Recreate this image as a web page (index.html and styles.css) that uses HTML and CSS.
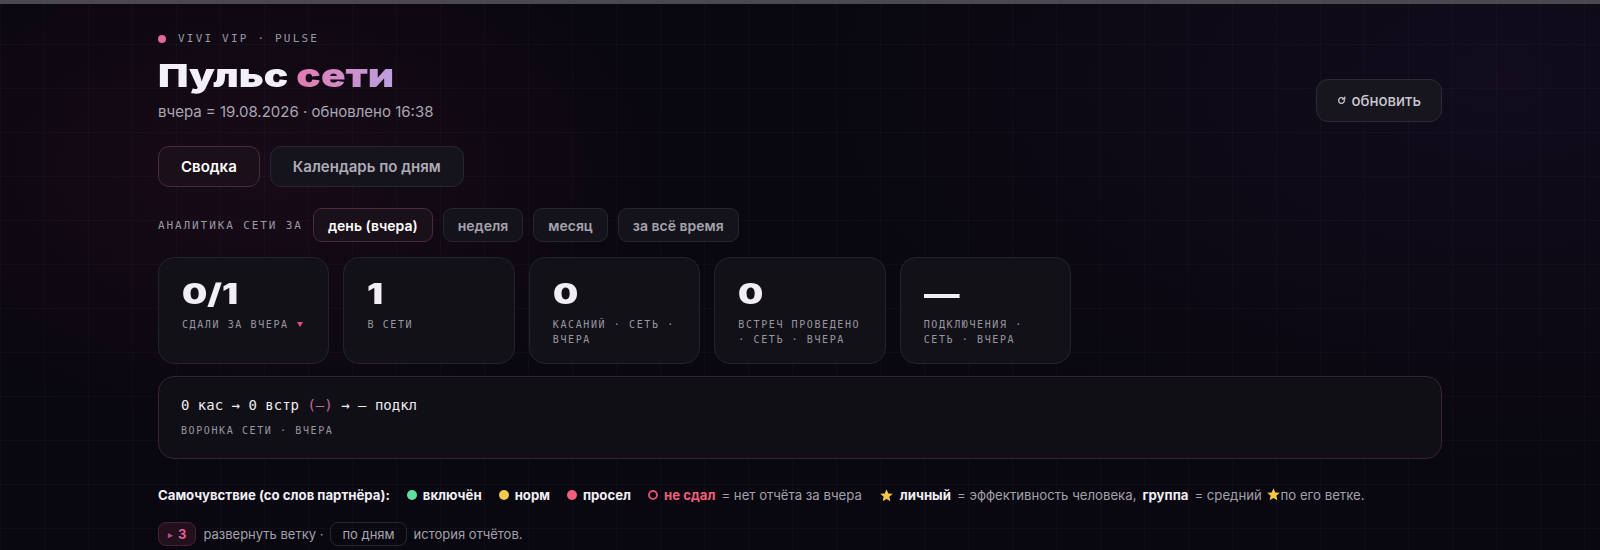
FILE: index.html
```html
<!DOCTYPE html>
<html lang="ru">
<head>
    <meta charset="UTF-8">
    <meta name="viewport" content="width=device-width, initial-scale=1.0">
    <title>Пульс сети</title>
    <link rel="stylesheet" href="styles.css">
</head>
<body>
    <div class="topbar"></div>

    <div class="page">
        <!-- Шапка -->
        <div class="header">
            <div>
                <div class="eyebrow"><span class="dot"></span>VIVI VIP · PULSE</div>
                <h1 class="title"><span class="wide">Пульс <span class="accent">сети</span></span></h1>
                <div class="subtitle">вчера = 19.08.2026 · обновлено 16:38</div>
            </div>
            <button class="refresh">
                <svg width="9" height="9" viewBox="0 0 10 10"><path d="M8.2 5a3.2 3.2 0 1 1-1-2.3" fill="none" stroke="currentColor" stroke-width="1.4" stroke-linecap="round"/><path d="M8.6 1.2v2.4H6.2" fill="none" stroke="currentColor" stroke-width="1.4" stroke-linecap="round" stroke-linejoin="round"/></svg>
                обновить
            </button>
        </div>

        <!-- Вкладки -->
        <div class="tabs">
            <button class="tab active">Сводка</button>
            <button class="tab">Календарь по дням</button>
        </div>

        <!-- Период -->
        <div class="period">
            <span class="caps">АНАЛИТИКА СЕТИ ЗА</span>
            <button class="chip active">день (вчера)</button>
            <button class="chip">неделя</button>
            <button class="chip">месяц</button>
            <button class="chip">за всё время</button>
        </div>

        <!-- Карточки -->
        <div class="stats">
            <div class="stat">
                <div class="num"><span class="wide">0/1</span></div>
                <div class="label">СДАЛИ ЗА ВЧЕРА <svg class="down" width="6" height="5" viewBox="0 0 6 5"><path d="M0 0h6L3 5z"/></svg></div>
            </div>
            <div class="stat">
                <div class="num"><span class="wide">1</span></div>
                <div class="label">В СЕТИ</div>
            </div>
            <div class="stat">
                <div class="num"><span class="wide">0</span></div>
                <div class="label">КАСАНИЙ · СЕТЬ · ВЧЕРА</div>
            </div>
            <div class="stat">
                <div class="num"><span class="wide">0</span></div>
                <div class="label">ВСТРЕЧ ПРОВЕДЕНО · СЕТЬ · ВЧЕРА</div>
            </div>
            <div class="stat">
                <div class="num"><span class="wide">—</span></div>
                <div class="label">ПОДКЛЮЧЕНИЯ · СЕТЬ · ВЧЕРА</div>
            </div>
        </div>

        <!-- Воронка -->
        <div class="funnel">
            <div class="funnel-line">0 кас → 0 встр <span class="pink">(–)</span> → – подкл</div>
            <div class="label">ВОРОНКА СЕТИ · ВЧЕРА</div>
        </div>

        <!-- Легенда -->
        <div class="legend">
            <b>Самочувствие (со слов партнёра):</b>
            <span class="item"><i class="bullet green"></i><b>включён</b></span>
            <span class="item"><i class="bullet yellow"></i><b>норм</b></span>
            <span class="item"><i class="bullet red"></i><b>просел</b></span>
            <span class="item"><i class="bullet ring"></i><b class="red-text">не сдал</b> <span class="muted">= нет отчёта за вчера</span></span>
            <span class="item">
                <svg class="star" viewBox="0 0 24 24"><path d="M12 2l2.9 6.6 7.1.7-5.4 4.8 1.6 7-6.2-3.7-6.2 3.7 1.6-7L2 9.3l7.1-.7z"/></svg>
                <b>личный</b> <span class="muted">= эффективность человека,</span> <b>группа</b> <span class="muted">= средний <svg class="star" viewBox="0 0 24 24"><path d="M12 2l2.9 6.6 7.1.7-5.4 4.8 1.6 7-6.2-3.7-6.2 3.7 1.6-7L2 9.3l7.1-.7z"/></svg>по его ветке.</span>
            </span>
        </div>

        <div class="hint">
            <span class="pill pill-pink"><span class="tri">▸</span>3</span>
            <span class="muted">развернуть ветку ·</span>
            <span class="pill">по дням</span>
            <span class="muted">история отчётов.</span>
        </div>
    </div>
</body>
</html>
```

FILE: styles.css
```css
body {
    margin: 0;
    font-family: Inter, "Noto Sans", sans-serif;
    color: #ecebf2;
    background-color: #09070f;
    background-image:
        radial-gradient(ellipse 420px 260px at 260px 170px, rgba(120, 30, 80, 0.14), transparent),
        radial-gradient(ellipse 700px 400px at 1500px 80px, rgba(70, 40, 110, 0.14), transparent),
        linear-gradient(rgba(255, 255, 255, 0.022) 1px, transparent 1px),
        linear-gradient(90deg, rgba(255, 255, 255, 0.022) 1px, transparent 1px);
    background-size: auto, auto, 44px 44px, 44px 44px;
    height: 550px;
    overflow: hidden;
}
button {
    font-family: inherit;
    cursor: pointer;
}
.topbar {
    height: 4px;
    background: #4a4952;
}
.page {
    max-width: 1284px;
    margin: 0 auto;
    padding-top: 28px;
}

/* Шапка */
.header {
    display: flex;
    justify-content: space-between;
    align-items: flex-start;
}
.eyebrow {
    display: flex;
    align-items: center;
    font-family: "DejaVu Sans Mono", monospace;
    font-size: 11px;
    line-height: 14px;
    letter-spacing: 2.2px;
    color: #9a98a4;
}
.dot {
    width: 8px;
    height: 8px;
    border-radius: 50%;
    background: #e0699f;
    margin-right: 12px;
}
.title {
    margin: 10px 0 0;
    font-size: 32px;
    line-height: 40px;
    font-weight: 900;
    color: #f3f1f7;
}
.wide {
    display: inline-block;
    transform: scaleX(1.27);
    transform-origin: left center;
}
.accent {
    background: linear-gradient(90deg, #e27bb1, #bc9fe0);
    -webkit-background-clip: text;
    background-clip: text;
    color: transparent;
}
.subtitle {
    margin-top: 6px;
    font-size: 15px;
    line-height: 20px;
    color: #a9a7b2;
}
.refresh {
    margin-top: 47px;
    height: 43px;
    padding: 0 20px;
    display: flex;
    align-items: center;
    gap: 5px;
    font-size: 15px;
    font-weight: 500;
    color: #c9c7d1;
    background: #17151d;
    border: 1px solid #2c2a33;
    border-radius: 12px;
}

/* Вкладки */
.tabs {
    display: flex;
    gap: 10px;
    margin-top: 24px;
}
.tab {
    height: 41px;
    padding: 0 22px;
    font-size: 15px;
    font-weight: 600;
    color: #aeacb7;
    background: #15131b;
    border: 1px solid #28262e;
    border-radius: 11px;
}
.tab.active {
    color: #fff;
    background: #1b1019;
    border-color: #4b2a3d;
}

/* Период */
.period {
    display: flex;
    align-items: center;
    gap: 10px;
    margin-top: 21px;
}
.caps {
    font-family: "DejaVu Sans Mono", monospace;
    font-size: 11px;
    letter-spacing: 1.9px;
    color: #9a98a4;
}
.chip {
    height: 34px;
    padding: 0 14px;
    font-size: 14px;
    font-weight: 600;
    color: #a5a3ae;
    background: #14121a;
    border: 1px solid #27252d;
    border-radius: 9px;
}
.chip.active {
    color: #fff;
    background: #1a1019;
    border-color: #4a2a3c;
}

/* Карточки */
.stats {
    display: grid;
    grid-template-columns: repeat(auto-fill, minmax(170px, 1fr));
    gap: 14px;
    margin-top: 15px;
}
.stat {
    height: 107px;
    box-sizing: border-box;
    padding: 20px 22px 0 23px;
    background: #131118;
    border: 1px solid #24222a;
    border-radius: 16px;
}
.num {
    font-size: 28px;
    line-height: 32px;
    font-weight: 900;
    color: #f1eff5;
}
.label {
    margin-top: 7px;
    font-family: "DejaVu Sans Mono", monospace;
    font-size: 10px;
    line-height: 15px;
    letter-spacing: 1.6px;
    color: #9896a1;
}
.down {
    fill: #e0507a;
    margin-left: 1px;
    vertical-align: 1px;
}

/* Воронка */
.funnel {
    margin-top: 12px;
    height: 83px;
    box-sizing: border-box;
    padding: 18px 22px 0;
    background: #110f16;
    border: 1px solid #3a2235;
    border-radius: 16px;
}
.funnel-line {
    font-family: "DejaVu Sans Mono", monospace;
    font-size: 14px;
    line-height: 20px;
    color: #ecebf2;
}
.funnel .label {
    margin-top: 9px;
    line-height: 14px;
}
.pink {
    color: #c96a9c;
}

/* Легенда */
.legend {
    display: flex;
    align-items: center;
    gap: 17px;
    margin-top: 26px;
    font-size: 13.2px;
    line-height: 20px;
    color: #f1eff5;
}
.legend b {
    font-weight: 700;
}
.item {
    display: flex;
    align-items: center;
    gap: 6px;
    white-space: pre;
}
.bullet {
    width: 10px;
    height: 10px;
    border-radius: 50%;
    box-sizing: border-box;
}
.green { background: #5fe0a1; }
.yellow { background: #f1c94f; }
.red { background: #f0607a; }
.ring { border: 2px solid #d4506c; }
.red-text { color: #ee6079; }
.muted {
    color: #a3a1ac;
    font-weight: 400;
}
.star {
    width: 15px;
    height: 15px;
    fill: #f4c64a;
    vertical-align: -2px;
}

.hint {
    display: flex;
    align-items: center;
    gap: 7px;
    margin-top: 17px;
    font-size: 13px;
}
.pill {
    height: 24px;
    padding: 0 11px;
    display: inline-flex;
    align-items: center;
    color: #a8a6b1;
    border: 1px solid #28262e;
    border-radius: 8px;
    box-sizing: border-box;
}
.pill-pink {
    padding: 0 9px;
    gap: 5px;
    color: #e0609a;
    font-weight: 700;
    background: #22101c;
    border-color: #4a2038;
}
.tri {
    font-size: 9px;
    color: #b0507e;
}
```
